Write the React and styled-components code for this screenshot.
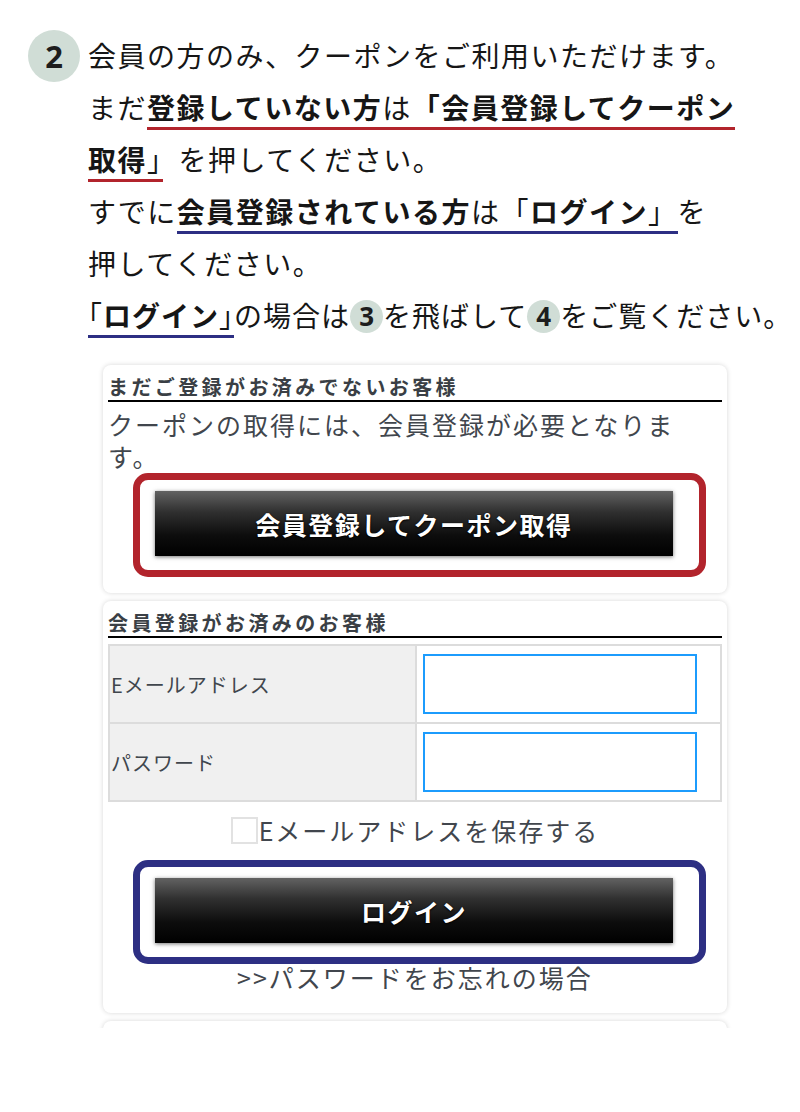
import styled, { createGlobalStyle } from 'styled-components';

const GlobalStyle = createGlobalStyle`
  html, body {
    margin: 0;
    padding: 0;
    background: #fff;
    overflow: hidden;
  }
  body {
    font-family: "Noto Sans CJK JP", "Noto Sans", sans-serif;
    color: #161616;
  }
`;

const Page = styled.main`
  width: 800px;
  padding-top: 29px;
`;

const Intro = styled.section`
  display: flex;
  align-items: flex-start;
  gap: 8px;
  padding-left: 28px;
`;

const StepBadge = styled.span`
  flex: none;
  width: 52px;
  height: 52px;
  margin-top: 1px;
  border-radius: 50%;
  background: #d0ddd6;
  display: flex;
  align-items: center;
  justify-content: center;
  font: 700 31px/1 "Noto Sans", sans-serif;
  color: #1d1d1d;
`;

const Lines = styled.div`
  font-size: 28px;
  line-height: 52px;
  letter-spacing: 1.5px;
  white-space: nowrap;
`;

const Line = styled.div`
  letter-spacing: ${(p) => (p.$tight ? '1px' : 'inherit')};
`;

const Strong = styled.b`
  font-weight: 700;
`;

const Half = styled.span`
  font-feature-settings: "halt";
`;

const Marked = styled.span`
  border-bottom: 3px solid ${(p) => (p.$tone === 'red' ? '#b2242c' : '#2d2f83')};
  margin-right: ${(p) => p.$after || 0}px;
`;

const Num = styled.span`
  display: inline-block;
  width: 33px;
  height: 33px;
  border-radius: 50%;
  background: #d0ddd6;
  text-align: center;
  font: 700 26px/33px "Noto Sans", sans-serif;
  letter-spacing: 0;
  color: #1d1d1d;
  vertical-align: 1px;
`;

const Shot = styled.div`
  margin: 17px 0 0 96px;
  width: 624px;
  height: 656px;
  padding: 7px;
  overflow: hidden;
`;

const Card = styled.div`
  background: #fff;
  border-radius: 8px;
  box-shadow: 0 0 5px rgba(0, 0, 0, 0.16);
  padding: 9px 5px ${(p) => p.$bottom || 16}px;
  margin-bottom: 8px;
  color: #41464d;
`;

const CardTitle = styled.h3`
  margin: 0;
  font-size: 20px;
  line-height: 26px;
  letter-spacing: 3.4px;
  font-weight: 700;
  color: #3a3f45;
  border-bottom: 2px solid #000;
`;

const Notice = styled.p`
  margin: 6px 0 0;
  font-size: 25px;
  line-height: 32px;
  letter-spacing: 2px;
`;

const Frame = styled.div`
  box-sizing: border-box;
  width: 573px;
  margin: ${(p) => p.$top}px 0 0 25px;
  padding: 11px 0 14px 15px;
  border: 7px solid ${(p) => (p.$tone === 'red' ? '#b2242c' : '#2d2f83')};
  border-radius: 15px;
`;

const BlackButton = styled.button`
  display: block;
  width: 518px;
  height: 65px;
  border: 0;
  padding: 0;
  background: linear-gradient(to bottom, #626262 0%, #303030 32%, #0d0d0d 68%, #000 100%);
  box-shadow: 0 1px 4px rgba(0, 0, 0, 0.55);
  color: #fff;
  font-family: "Noto Sans CJK JP", sans-serif;
  font-size: 25px;
  font-weight: 700;
  letter-spacing: 1.5px;
  text-shadow: 0 1px 2px #000, 0 0 1px #000;
  cursor: pointer;
`;

const FieldGrid = styled.div`
  display: grid;
  grid-template-columns: 305px 1fr;
  grid-auto-rows: 76px;
  gap: 2px;
  padding: 2px;
  margin-top: 6px;
  background: #dcdcdc;
`;

const LabelCell = styled.label`
  display: flex;
  align-items: center;
  padding-left: 1px;
  background: #f0f0f0;
  font-size: 20px;
  letter-spacing: 1px;
  color: #40464d;
`;

const InputCell = styled.div`
  display: flex;
  align-items: center;
  padding-left: 6px;
  background: #fff;
`;

const TextInput = styled.input`
  box-sizing: border-box;
  width: 274px;
  height: 60px;
  padding: 0 6px;
  border: 2px solid #1c9cfd;
  background: #fff;
  outline: none;
  font-size: 20px;
`;

const SaveRow = styled.label`
  display: flex;
  align-items: center;
  justify-content: center;
  margin-top: 11px;
  font-size: 25px;
  line-height: 34px;
  letter-spacing: 2px;
`;

const Check = styled.input`
  appearance: none;
  box-sizing: border-box;
  width: 27px;
  height: 27px;
  margin: 0 1px 0 0;
  border: 2px solid #e2e2e2;
  background: #fff;
`;

const ForgotLink = styled.a`
  display: block;
  text-align: center;
  font-size: 25px;
  line-height: 26px;
  letter-spacing: 2px;
  color: #41464d;
  text-decoration: none;
`;

export default function App() {
  return (
    <>
      <GlobalStyle />
      <Page>
        <Intro>
          <StepBadge>2</StepBadge>
          <Lines>
            <Line>会員の方のみ、クーポンをご利用いただけます。</Line>
            <Line>
              まだ
              <Marked $tone="red">
                <Strong>登録していない方</Strong>は<Strong>「会員登録してクーポン</Strong>
              </Marked>
            </Line>
            <Line>
              <Marked $tone="red" $after={16}>
                <Strong>取得</Strong>
                <Half>」</Half>
              </Marked>
              を押してください。
            </Line>
            <Line>
              すでに
              <Marked $tone="blue">
                <Strong>会員登録されている方</Strong>は「<Strong>ログイン</Strong>」
              </Marked>
              を
            </Line>
            <Line>押してください。</Line>
            <Line $tight>
              <Marked $tone="blue">
                <Half>「</Half>
                <Strong>ログイン</Strong>
                <Half>」</Half>
              </Marked>
              の場合は<Num>3</Num>を飛ばして<Num>4</Num>をご覧ください。
            </Line>
          </Lines>
        </Intro>

        <Shot>
          <Card>
            <CardTitle>まだご登録がお済みでないお客様</CardTitle>
            <Notice>クーポンの取得には、会員登録が必要となります。</Notice>
            <Frame $tone="red" $top={1}>
              <BlackButton>会員登録してクーポン取得</BlackButton>
            </Frame>
          </Card>

          <Card $bottom={23}>
            <CardTitle>会員登録がお済みのお客様</CardTitle>
            <FieldGrid>
              <LabelCell htmlFor="mail">Eメールアドレス</LabelCell>
              <InputCell>
                <TextInput id="mail" type="email" />
              </InputCell>
              <LabelCell htmlFor="pass">パスワード</LabelCell>
              <InputCell>
                <TextInput id="pass" type="password" />
              </InputCell>
            </FieldGrid>
            <SaveRow>
              <Check type="checkbox" />
              Eメールアドレスを保存する
            </SaveRow>
            <Frame $tone="blue" $top={13}>
              <BlackButton>ログイン</BlackButton>
            </Frame>
            <ForgotLink href="#">&gt;&gt;パスワードをお忘れの場合</ForgotLink>
          </Card>

          <Card $bottom={80}>
            <CardTitle>&nbsp;</CardTitle>
          </Card>
        </Shot>
      </Page>
    </>
  );
}
